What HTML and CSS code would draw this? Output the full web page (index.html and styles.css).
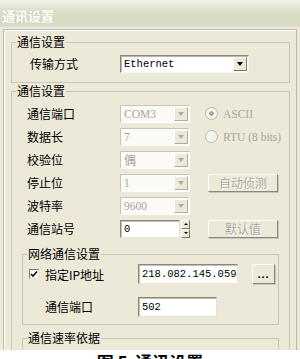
FILE: index.html
```html
<!DOCTYPE html>
<html lang="zh-CN">
<head>
    <meta charset="UTF-8">
    <title>通讯设置</title>
    <link rel="stylesheet" href="styles.css">
</head>
<body>
    <div class="window">
        <div class="titlebar">通讯设置</div>
        <div class="frame">
            <fieldset class="group first">
                <legend>通信设置</legend>
                <div class="line">
                    <span class="label">传输方式</span>
                    <div class="select wide"><span class="val mono">Ethernet</span><span class="drop"></span></div>
                </div>
            </fieldset>
            <fieldset class="group second">
                <legend>通信设置</legend>
                <div class="inner">
                    <div class="grid">
                        <span class="label">通信端口</span>
                        <div class="select off"><span class="val">COM3</span><span class="drop"></span></div>
                        <span class="radio checked">ASCII</span>

                        <span class="label">数据长</span>
                        <div class="select off"><span class="val">7</span><span class="drop"></span></div>
                        <span class="radio">RTU (8 bits)</span>

                        <span class="label">校验位</span>
                        <div class="select off"><span class="val cjk">偶</span><span class="drop"></span></div>
                        <span></span>

                        <span class="label">停止位</span>
                        <div class="select off"><span class="val">1</span><span class="drop"></span></div>
                        <span class="btn off">自动侦测</span>

                        <span class="label">波特率</span>
                        <div class="select off"><span class="val">9600</span><span class="drop"></span></div>
                        <span></span>

                        <span class="label">通信站号</span>
                        <div class="spin">
                            <span class="input mono">0</span>
                            <span class="arrows"><span class="up"></span><span class="down"></span></span>
                        </div>
                        <span class="btn off">默认值</span>
                    </div>

                    <fieldset class="sub">
                        <legend>网络通信设置</legend>
                        <div class="subgrid">
                            <span class="check">
                                <span class="box"><svg width="8" height="8" viewBox="0 0 8 8"><path d="M1 4 L3 6 L7 1.5" fill="none" stroke="#000" stroke-width="1.6"/></svg></span>
                                指定IP地址
                            </span>
                            <span class="input mono">218.082.145.059</span>
                            <span class="btn dots">...</span>

                            <span class="label indent">通信端口</span>
                            <span class="input mono short">502</span>
                            <span></span>
                        </div>
                    </fieldset>

                    <fieldset class="sub">
                        <legend>通信速率依据</legend>
                        <div class="rate">
                            <span class="radio">PLC 设置</span>
                        </div>
                    </fieldset>
                </div>
            </fieldset>
        </div>
    </div>
    <div class="caption">图 5&nbsp;&nbsp;通讯设置</div>
</body>
</html>
```

FILE: styles.css
```css
*{
    margin:0;
    padding:0;
    box-sizing:border-box;
}
html,body{
    overflow:hidden;
}
body{
    background:#fff;
    font-family:"Noto Sans CJK SC",sans-serif;
    font-size:12px;
    color:#000;
}
.mono{
    font-family:"Liberation Mono",monospace;
    font-size:10.5px;
}
.cjk{
    font-family:"Noto Sans CJK SC",sans-serif;
}
.window{
    width:300px;
    height:350px;
    overflow:hidden;
    background:#ece9d8;
}
.titlebar{
    height:27px;
    padding:3px 0 0 2px;
    line-height:26px;
    font-size:13px;
    font-weight:bold;
    color:#fff;
    background:linear-gradient(#f4f5ec,#dde1ca 35%,#d5dac0 75%,#dcdfcb);
    text-shadow:0 0 2px #c4c9ad;
}
.frame{
    height:340px;
    margin:2px 3px 0;
    padding:5px 6px 0 7px;
    border:1px solid #bdbaa9;
    box-shadow:inset 1px 1px 0 #fff;
}

/* group boxes */
fieldset{
    min-width:0;
    border:1px solid #c9c6b5;
}
legend{
    margin-left:4px;
    padding:0 1px;
    font-size:12px;
    line-height:14px;
}
.group.second{
    margin-top:1px;
    height:300px;
}
.label{
    padding-left:5px;
    line-height:14px;
}
.first .line{
    display:flex;
    align-items:center;
    padding:6px 0 9px 18px;
}
.first .label{
    width:90px;
    padding-left:0;
}

/* select boxes */
.select{
    display:flex;
    align-items:center;
    width:70px;
    height:18px;
    background:#fff;
    border:1px solid;
    border-color:#8a887d #f4f3ee #f4f3ee #8a887d;
    box-shadow:inset 1px 1px 0 #b9b6a8;
}
.select.wide{
    width:129px;
}
.select .val{
    flex:1;
    padding-left:3px;
    line-height:14px;
    font-family:"Liberation Serif",serif;
    font-size:11.5px;
}
.select .val.mono{
    font-family:"Liberation Mono",monospace;
    font-size:10.5px;
}
.select .val.cjk{
    font-family:"Noto Sans CJK SC",sans-serif;
    font-size:12px;
}
.drop{
    display:flex;
    align-items:center;
    justify-content:center;
    width:14px;
    height:14px;
    margin-right:1px;
    background:#ece9d8;
    border:1px solid;
    border-color:#fff #7a786e #7a786e #fff;
}
.drop::after{
    content:"";
    border-top:4px solid #000;
    border-left:3px solid transparent;
    border-right:3px solid transparent;
}
.select.off{
    background:#fbfaf6;
    border-color:#c7c4b4 #fff #fff #c7c4b4;
    box-shadow:none;
}
.select.off .val{
    color:#a7a69c;
}
.select.off .drop{
    border-color:#fff #b1aea0 #b1aea0 #fff;
}
.select.off .drop::after{
    border-top-color:#acaaa0;
}

/* second group */
.inner{
    padding:4px 10px 0;
}
.grid{
    display:grid;
    grid-template-columns:98px 70px 1fr;
    grid-auto-rows:23px;
    align-items:center;
}
.radio{
    display:flex;
    align-items:center;
    padding-left:15px;
    white-space:nowrap;
    font-family:"Liberation Serif",serif;
    font-size:11.5px;
    color:#a9a79b;
}
.radio::before{
    content:"";
    flex:none;
    width:11px;
    height:11px;
    margin-right:5px;
    border:1px solid #bebbab;
    border-radius:50%;
    background:#f4f3ee;
}
.radio.checked::before{
    background:radial-gradient(circle,#a9a79b 0,#a9a79b 2px,#f4f3ee 2.5px);
}
.btn{
    display:flex;
    align-items:center;
    justify-content:center;
    height:18px;
    background:#ece9d8;
    border:1px solid;
    border-color:#fff #8c8a7f #8c8a7f #fff;
    box-shadow:1px 1px 0 #c9c6b5;
}
.btn.off{
    width:70px;
    margin-left:18px;
    color:#a9a79b;
    text-shadow:1px 1px 0 #fff;
}
.spin{
    display:flex;
    align-items:center;
}
.input{
    display:flex;
    align-items:center;
    height:18px;
    padding-left:3px;
    background:#fff;
    border:1px solid;
    border-color:#8a887d #e6e4da #e6e4da #8a887d;
    box-shadow:inset 1px 1px 0 #c4c1b3;
}
.spin .input{
    width:62px;
}
.arrows{
    display:flex;
    flex-direction:column;
    width:9px;
    height:18px;
    margin-left:1px;
}
.arrows span{
    flex:1;
    display:flex;
    align-items:center;
    justify-content:center;
    background:#ece9d8;
    border:1px solid;
    border-color:#fff #7a786e #7a786e #fff;
}
.arrows .up::after{
    content:"";
    border-bottom:2px solid #000;
    border-left:2px solid transparent;
    border-right:2px solid transparent;
}
.arrows .down::after{
    content:"";
    border-top:2px solid #000;
    border-left:2px solid transparent;
    border-right:2px solid transparent;
}

/* network sub group */
.sub{
    margin-top:7px;
}
.sub + .sub{
    margin-top:6px;
}
.subgrid{
    display:grid;
    grid-template-columns:95px 100px 23px;
    grid-template-rows:20px 20px;
    column-gap:14px;
    row-gap:13px;
    align-items:center;
    padding:3px 0 7px 6px;
}
.subgrid .input{
    height:20px;
}
.subgrid .input.short{
    width:79px;
}
.check{
    display:flex;
    align-items:center;
    gap:6px;
}
.check .box{
    display:flex;
    align-items:center;
    justify-content:center;
    width:10px;
    height:10px;
    background:#fff;
    border:1px solid;
    border-color:#7a786e #e6e4da #e6e4da #7a786e;
}
.label.indent{
    padding-left:16px;
}
.btn.dots{
    height:20px;
    font-family:"Liberation Sans",sans-serif;
    font-weight:bold;
    font-size:11px;
    letter-spacing:1px;
}
.rate{
    padding:3px 0 0 6px;
}
.rate .radio{
    padding-left:0;
    font-family:"Noto Sans CJK SC",sans-serif;
    font-size:12px;
}

.caption{
    height:40px;
    padding-top:2px;
    background:#fff;
    text-align:center;
    font-weight:bold;
    font-size:17px;
    line-height:20px;
}
```
